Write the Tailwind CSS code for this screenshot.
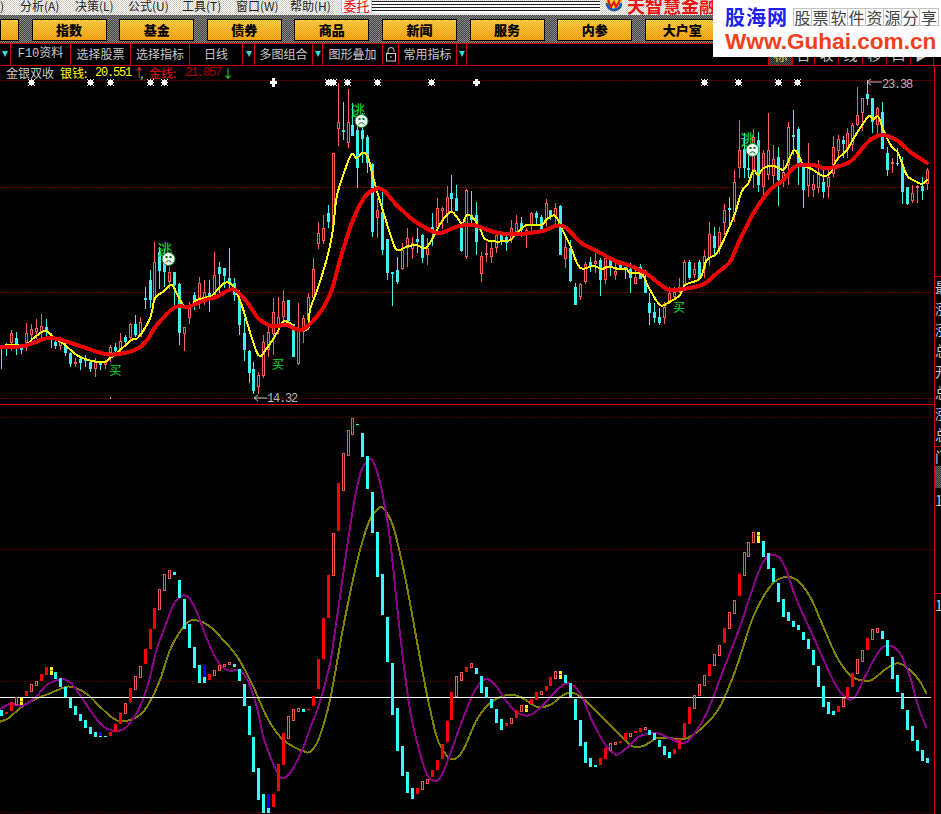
<!DOCTYPE html>
<html lang="zh">
<head>
<meta charset="UTF-8" />
<title>金银双收</title>
<script src="https://cdn.jsdelivr.net/npm/@tailwindcss/browser@4"></script>
</head>
<body class="relative w-[941px] h-[814px] overflow-hidden bg-black font-['Noto_Sans_CJK_SC',sans-serif]">

<!-- menu -->
<div class="flex h-[15px] overflow-hidden items-start bg-[repeating-conic-gradient(#ffffff_0_25%,#cfcbc0_0_50%)] bg-[length:2px_2px] text-[12px] leading-[11px] text-[#222]">
  <span class="w-[20px]">)</span>
  <span class="w-[55px]">分析(A)</span>
  <span class="w-[53px]">决策(L)</span>
  <span class="w-[54px]">公式(U)</span>
  <span class="w-[54px]">工具(T)</span>
  <span class="w-[54px]">窗口(W)</span>
  <span class="w-[51px]">帮助(H)</span>
  <span class="w-[31px] h-[13px] rounded-b-[2px] bg-white border-b border-x border-[#b8c0e0] text-center text-[13px] leading-[11px] text-[#f00000]">委托</span>
  <span class="w-[228px] h-[12px] mt-px bg-[repeating-linear-gradient(#222222_0_1px,#ffffff_1px_3px)]"></span>
  <svg class="w-[22px] h-[15px]" viewBox="0 0 22 15">
    <circle cx="14" cy="3" r="8.5" fill="#f8d020" />
    <path d="M5.5 3a8.5 8.5 0 0 0 17 0h-3a5.5 5.5 0 0 1-11 0z" fill="#1060c0" />
    <path d="M8 0l3 7 3-5 2 5 4-7" fill="none" stroke="#e01010" stroke-width="2" />
  </svg>
  <span class="ml-[5px] font-bold text-[18px] leading-[11px] text-[#f01010] whitespace-nowrap">天智慧金融</span>
</div>

<!-- yellow buttons -->
<div class="flex h-[29px] gap-[12.6px] pt-[4px] border-b border-[#d00000] bg-[repeating-conic-gradient(#888888_0_25%,#444444_0_50%)] bg-[length:2px_2px] text-[13px] font-black leading-[20px] text-center text-black *:h-[22px] *:w-[75px] *:border *:border-black *:bg-[repeating-conic-gradient(#ffffff00_0_25%,#d8800066_0_50%),linear-gradient(#ffd84f,#f8a818)] *:bg-[length:2px_2px,100%_100%]">
  <div class="!w-[19px] border-l-0"></div>
  <div>指数</div>
  <div>基金</div>
  <div>债券</div>
  <div>商品</div>
  <div>新闻</div>
  <div>服务</div>
  <div>内参</div>
  <div>大户室</div>
</div>

<!-- second toolbar -->
<div class="flex h-[22px] border-b border-[#d00000] text-[12px] leading-[20px] text-[#c8c8c8]">
  <div class="flex w-[11px] pt-[7px] justify-center border-r border-[#d00000]">
    <span class="w-0 h-0 border-x-[3px] border-x-transparent border-t-[6px] border-t-[#30d8d8]"></span>
  </div>
  <div class="w-[60px] border-r border-[#d00000] text-center font-['Liberation_Mono','Noto_Sans_CJK_SC',monospace]">F10资料</div>
  <div class="w-[60px] border-r border-[#d00000] text-center">选择股票</div>
  <div class="w-[59px] border-r border-[#d00000] text-center">选择指标</div>
  <div class="flex w-[65px] border-r border-[#d00000]">
    <span class="w-[52px] text-center">日线</span>
    <div class="flex flex-1 pt-[7px] justify-center border-l border-[#d00000]">
      <span class="w-0 h-0 border-x-[3px] border-x-transparent border-t-[6px] border-t-[#30d8d8]"></span>
    </div>
  </div>
  <div class="flex w-[68px] border-r border-[#d00000]">
    <span class="w-[57px] text-center">多图组合</span>
    <div class="flex flex-1 pt-[7px] justify-center border-l border-[#d00000]">
      <span class="w-0 h-0 border-x-[3px] border-x-transparent border-t-[6px] border-t-[#30d8d8]"></span>
    </div>
  </div>
  <div class="w-[60px] border-r border-[#d00000] text-center">图形叠加</div>
  <div class="flex w-[16px] items-center justify-center border-r border-[#d00000]">
    <svg class="w-[12px] h-[15px]" viewBox="0 0 12 15" fill="none" stroke="#d0d0d0">
      <path d="M3 6V3.5a3 3 0 0 1 6 0V5" />
      <rect x="1.5" y="6.5" width="9" height="7.5" />
      <path d="M5 10h2" />
    </svg>
  </div>
  <div class="flex w-[68px] border-r border-[#d00000]">
    <span class="w-[57px] text-center">常用指标</span>
    <div class="flex flex-1 pt-[7px] justify-center border-l border-[#d00000]">
      <span class="w-0 h-0 border-x-[3px] border-x-transparent border-t-[6px] border-t-[#30d8d8]"></span>
    </div>
  </div>
  <div class="w-[301px]"></div>
  <div class="flex text-[14px] text-center text-[#c8c8c8]">
    <span class="w-[25px] border-x border-[#d00000] text-[#e8d040] bg-[repeating-conic-gradient(#555555_0_25%,#222222_0_50%)] bg-[length:2px_2px]">标</span>
    <span class="w-[22px] border-r border-[#d00000]">日</span>
    <span class="w-[24px] border-r border-[#d00000]">收</span>
    <span class="w-[24px] border-r border-[#d00000]">线</span>
    <span class="w-[24px] border-r border-[#d00000]">移</span>
    <span class="w-[24px] border-r border-[#d00000]">口</span>
    <span class="w-[23px] border-r border-[#d00000]">▶</span>
  </div>
</div>

<!-- watermark over the toolbars -->
<div class="absolute top-0 right-0 w-[228px] h-[57px] bg-white pl-[12px] pt-[3px]">
  <div class="flex items-center h-[28px]">
    <span class="w-[68px] font-bold text-[20px] tracking-[1px] text-[#2020f0]">股海网</span>
    <div class="flex border border-[#c4c4c4] text-[16px] leading-[16px] text-[#444444]">
      <span class="w-[18px] border-r border-[#c4c4c4] text-center">股</span>
      <span class="w-[18px] border-r border-[#c4c4c4] text-center">票</span>
      <span class="w-[18px] border-r border-[#c4c4c4] text-center">软</span>
      <span class="w-[18px] border-r border-[#c4c4c4] text-center">件</span>
      <span class="w-[18px] border-r border-[#c4c4c4] text-center">资</span>
      <span class="w-[18px] border-r border-[#c4c4c4] text-center">源</span>
      <span class="w-[18px] border-r border-[#c4c4c4] text-center">分</span>
      <span class="w-[18px] text-center">享</span>
    </div>
  </div>
  <div class="font-['Liberation_Sans',sans-serif] font-bold text-[22.6px] leading-[22px] text-[#f04020] whitespace-nowrap">Www.Guhai.com.cn</div>
</div>

<!-- charts and right column -->
<div class="relative flex h-[748px]">
  <svg id="chart" class="block w-[934px] h-[748px]" viewBox="0 66 934 748"></svg>

  <div class="absolute left-[6px] top-0 flex h-[14px] items-center whitespace-nowrap text-[12px] leading-[14px] text-[#c8c8c8]">
    <span class="w-[54px]">金银双收</span>
    <span class="w-[35px] text-[#ffff00]">银钱:</span>
    <span class="w-[38px] tracking-[-1.2px] font-['Liberation_Mono',monospace] text-[#ffff00]">20.551</span>
    <span class="w-[7px] text-[#ff4040]">↑</span>
    <span class="w-[9px]">,</span>
    <span class="w-[36px] text-[#f01010]">金线:</span>
    <span class="w-[37px] tracking-[-1.2px] font-['Liberation_Mono',monospace] text-[#b80000]">21.057</span>
    <span class="text-[#30e030]">↓</span>
  </div>

  <div class="w-[7px] overflow-hidden border-l border-[#d00000] text-[14px] leading-[21px] text-[#c8c8c8] whitespace-nowrap">
    <div class="h-[211px] border-b border-[#d00000]"></div>
    <div>最</div><div>涨</div><div>涨</div><div>总</div><div>开</div><div>总</div><div>涨</div><div>总</div>
    <div class="h-[1px] mt-[1px] bg-[#d00000]"></div>
    <div class="h-[19px] leading-[18px]">门</div>
    <div class="h-[22px] bg-[repeating-conic-gradient(#666666_0_25%,#333333_0_50%)] bg-[length:2px_2px]"></div>
    <div class="h-[105px] leading-[24px]">1</div>
    <div class="h-[1px] bg-[#d00000]"></div>
    <div class="leading-[22px]">1</div>
  </div>
</div>

<script>
  const GRID = 4.95;
  const cx = i => 1.5 + GRID * i;

  // candles, read off in 3x crops: each block has an origin and a first index
  // C/R high,top,bottom,low
  const candles = [
    { oy: 230, start: 0, rows: 'C345,345,355,417 C340,345,355,380 R300,310,340,362 C305,325,345,375 C345,350,358,372 R278,310,340,362 R282,298,315,338 R268,295,308,328 R252,287,305,325 C268,290,305,330 C310,315,325,355 C320,335,348,355 R335,335,348,360 C340,345,368,380 C365,368,402,410 R385,396,398,412 C385,387,398,420 C375,385,395,410 C395,395,415,425 R385,395,415,443 C395,398,405,418 R390,395,405,418 R345,352,370,395 C340,350,363,380 R310,332,356,368 C315,320,335,350 R280,282,325,330 C255,282,315,320 R262,275,320,322 C170,205,212,235 C120,150,210,235 R37,95,210,215 C50,65,122,175 C60,90,125,170 R110,125,155,175 C125,125,165,230 C160,162,310,345 R290,292,313,362 R215,235,265,280 C185,195,215,240 R140,160,205,235 R150,185,210,225 C150,190,205,245 R67,135,195,210 C95,110,130,190 C120,115,140,175 C55,145,160,175 C145,160,195,215 C180,210,285,315 C265,310,362,395 C360,362,428,460 C395,418,485,490 R425,435,470,490 R315,335,437,445 R290,305,360,380 R205,245,310,375 R200,260,285,310 R180,212,260,290 C210,210,272,285 C283,283,382,382 R220,295,403,405 R255,265,308,340 R190,202,272,300' },
    { oy: 80, start: 63, rows: 'R535,568,655,660 R425,458,492,505 R405,445,485,492 C375,400,428,445 R220,220,435,455 R10,127,148,200 C65,150,155,180 R28,127,190,205 C70,135,168,165 C130,150,265,325 C100,150,178,250 C165,172,250,280 C250,253,458,472 R355,390,415,475 C330,395,510,525 C477,478,580,600 C575,577,584,678 C530,570,605,610 R490,510,568,570 R445,475,505,563 R470,488,505,535 C445,478,488,520 C462,465,535,550 R475,505,525,555 C400,442,450,500 R355,385,445,462 R380,385,395,445 R318,350,405,430 C285,340,358,395 C315,355,395,385 C425,425,513,515 R327,330,530,537 C333,405,420,430 C365,405,485,525 R517,527,580,607 R490,520,525,548 R480,505,532,550 R450,465,505,520 C455,465,480,495 C460,472,490,515 R420,445,480,490 R405,430,458,465 C410,430,452,470 R445,450,465,505 R395,400,440,455 C392,400,415,430 C405,410,445,450 R357,370,420,440 C390,390,410,420 R370,385,410,435 C375,377,525,525 R475,500,535,565 C480,505,603,605 C610,620,675,675 R610,612,652,660 R545,552,605,610 C530,545,560,575 R520,542,552,580 C535,540,600,650 R530,535,600,610 C535,538,560,590 R545,572,583,600 C545,548,565,570' },
    { oy: 70, start: 126, rows: 'C590,590,600,625 C580,598,625,670 R590,620,640,640 C583,590,625,625 C600,630,668,670 C670,700,730,765 C700,727,745,760 C715,742,760,765 R695,710,742,760 R650,670,695,700 R650,665,680,685 R625,650,665,670 R570,577,650,660 C570,575,622,630 R580,598,615,625 C570,575,622,625 R540,558,598,625 R457,492,565,590 C470,498,535,560 R470,485,535,550 R403,420,458,495 C380,415,420,470 R300,337,430,455 R150,240,295,325 C190,237,295,325 C240,295,302,325 R178,200,300,355 C185,210,345,365 R240,250,352,385 R130,240,315,330 R225,268,318,355 C230,262,330,407 R270,305,325,350 R157,170,285,345 C120,195,202,255 C170,178,285,345 C285,290,360,415 R220,295,348,383 R315,343,362,380 R270,305,352,368 C300,337,368,385 R300,320,350,385 R198,230,310,320 R195,208,243,270 C198,210,222,265 R175,190,240,265 R160,165,225,245 R52,135,165,168 R85,85,130,185 C30,72,88,105 C85,85,158,190 R110,115,165,190 C95,125,235,235 C230,250,300,318 R265,277,282,310 C235,280,282,290 C260,282,365,400 C350,350,402,405 R345,370,395,400 R345,348,350,400 C320,347,362,390 R295,300,342,360' }
  ];

  // bars of the lower panel: C/R/H top,bottom, Y top,bottom, B top,split,bottom
  const bars = [
    { oy: 560, start: 0, rows: 'C450,468 R456,462 R426,454 H411,435 Y414,436 R393,408 H372,396 H363,378 R342,363 R321,345 Y321,345 C336,357 C354,381 C381,411 C414,444 C438,465 C462,483 C480,504 C501,522 C516,531 B516,528,531 C528,531 R516,528 R492,516 R459,492 H429,462 R384,426 H348,390 H318,354 R267,312 R207,267 R144,207 H87,150 H42,93 H30,57 C36,45 C60,114 C117,207 C192,264 C261,324 C315,369 B315,351,369 R342,360 H330,348 H315,333 H312,321 H306,315 C312,321 C327,363 C372,438 C438,525 C531,636 C624,720 C702,759 B702,744,759 R702,741 R612,693 R519,615 H468,537 H447,483 H444,456 C447,456 R447,450' },
    { oy: 400, start: 63, rows: 'R888,918 R777,867 R654,777 R525,654 H400,528 R249,393 H159,273 H90,168 H54,105 C72,75 C99,171 C168,267 C276,399 C396,531 C522,645 C651,786 C789,945 C924,1053 C1038,1128 C1116,1179 C1164,1197 R1164,1182 H1143,1170 H1137,1152 R1110,1131 R1080,1110 R1032,1077 R963,1026 R876,960 H828,891 H816,843 R801,816 H789,804 C804,822 C828,879 C861,894 C897,924 C927,969 C957,990 R969,978 H954,972 R930,954 H915,936 Y915,936 R897,912 R876,900 H873,885 R858,873 R831,858 H813,837 Y813,837 C825,849 C849,891 C897,960 C960,1038 C1026,1089 C1074,1101 C1095,1101 R1074,1095 R1044,1077 H1029,1053 H1026,1035 R1023,1029' },
    { oy: 500, start: 126, rows: 'R699,720 H699,711 R693,699 R684,696 H681,690 C690,705 C699,720 C720,741 C738,765 C756,774 R747,762 R717,747 R669,714 R621,672 H585,627 H552,588 H525,558 R492,528 H462,498 H435,468 R384,429 H336,387 H300,342 R222,288 H156,228 H126,171 H96,129 Y96,129 C123,171 C159,207 C204,246 C249,306 C297,351 C336,363 C363,381 C375,390 C396,420 C417,447 C450,495 C498,561 C558,621 C606,642 C633,645 R618,636 H594,621 R561,594 R519,561 H477,522 H450,486 R414,450 H387,420 H384,399 C393,417 C420,468 C471,537 C525,576 C579,627 C630,690 C678,723 C720,753 C750,783 C774,789' }
  ];

  // line paths in the same crop coordinates
  const toReal = (ox, oy, pts) => pts.map(([x, y]) => [ox + x / 3, oy + y / 3]);

  const yellow = [
    ...toReal(0, 230, [[0,352],[25,345],[75,345],[100,325],[135,303],[165,325],[195,345],[230,375],[265,390],[310,397],[330,385],[355,365],[395,330],[415,322],[450,265],[465,205],[490,185],[515,165],[530,190],[550,225],[570,230],[590,210],[635,197],[660,170],[680,157],[700,170],[725,225],[745,290],[775,375],[800,355],[830,310],[850,275],[870,280],[890,297],[925,295]]),
    ...toReal(310, 80, [[0,690],[25,620],[55,520],[70,440],[80,350],[105,270],[125,222],[140,235],[160,218],[175,235],[190,295],[215,380],[240,460],[260,510],[290,500],[320,495],[345,505],[365,480],[395,425],[425,395],[455,430],[470,405],[490,415],[510,445],[530,480],[595,482],[620,460],[650,435],[695,435],[710,418],[735,407],[755,445],[780,495],[810,563],[850,558],[875,567],[895,560],[925,567]]),
    ...toReal(620, 70, [[0,597],[20,597],[30,610],[65,612],[85,650],[120,705],[150,695],[180,675],[195,645],[240,625],[260,570],[290,550],[320,490],[345,430],[365,365],[385,340],[400,302],[415,315],[430,295],[460,287],[480,297],[495,295],[520,243],[535,255],[550,285],[575,297],[610,318],[630,310],[650,270],[680,240],[710,190],[745,140],[760,148],[775,140],[790,180],[815,230],[835,250],[860,315],[880,330],[905,342],[920,330]])
  ];
  const red = [
    ...toReal(0, 230, [[0,350],[25,352],[75,347],[110,335],[140,325],[175,327],[215,340],[260,355],[320,373],[370,370],[415,355],[445,325],[470,285],[525,232],[565,230],[610,212],[650,200],[700,178],[740,215],[775,265],[815,288],[860,285],[890,298],[915,295]]),
    ...toReal(310, 80, [[35,690],[65,630],[90,540],[125,430],[155,365],[180,335],[215,327],[260,375],[310,420],[370,455],[400,457],[440,440],[490,435],[540,452],[590,462],[690,455],[740,437],[770,445],[815,490],[870,518],[925,548]]),
    ...toReal(620, 70, [[0,577],[70,605],[130,650],[160,660],[245,645],[290,610],[330,575],[355,520],[400,430],[450,360],[490,330],[530,287],[590,287],[620,295],[690,275],[745,215],[785,195],[830,210],[870,245],[920,278]])
  ];
  const purple = [
    ...toReal(0, 560, [[0,447],[30,432],[50,435],[75,435],[110,408],[140,375],[165,363],[190,357],[215,372],[240,405],[270,450],[300,490],[330,510],[365,510],[390,490],[420,440],[445,370],[470,270],[495,200],[520,135],[545,108],[565,112],[590,155],[620,235],[650,300],[680,330],[720,333],[745,365],[770,440],[790,530],[815,600],[840,650],[860,650],[885,615],[915,550]]),
    ...toReal(310, 400, [[0,985],[25,920],[60,790],[90,590],[125,350],[150,225],[170,185],[190,185],[215,270],[240,420],[270,700],[300,930],[330,1060],[355,1130],[385,1140],[410,1090],[450,980],[490,880],[525,838],[555,855],[590,905],[625,940],[660,945],[700,915],[740,870],[775,850],[810,880],[850,970],[890,1040],[915,1063]]),
    ...toReal(620, 500, [[0,760],[30,735],[60,708],[110,700],[150,715],[190,730],[220,705],[260,640],[310,510],[360,380],[400,260],[430,185],[460,165],[490,190],[530,300],[580,410],[620,500],[650,560],[680,595],[705,590],[740,520],[780,450],[810,437],[840,460],[870,530],[895,620],[919,683]])
  ];
  const olive = [
    ...toReal(0, 560, [[0,485],[25,475],[60,445],[100,420],[150,400],[200,380],[230,385],[265,405],[300,440],[340,475],[370,484],[420,465],[450,425],[480,360],[510,270],[540,215],[565,185],[595,182],[630,200],[670,240],[715,295],[760,380],[800,470],[840,530],[880,560],[915,575]]),
    ...toReal(310, 400, [[0,1055],[25,1020],[60,900],[100,680],[140,490],[175,370],[200,330],[220,325],[250,380],[285,530],[320,720],[350,880],[380,1010],[405,1060],[430,1078],[460,1050],[500,960],[540,910],[590,885],[630,890],[680,920],[720,915],[760,885],[790,878],[830,905],[880,955],[925,1000]]),
    ...toReal(620, 500, [[0,705],[35,738],[70,738],[110,715],[150,715],[200,715],[250,680],[300,620],[350,500],[400,350],[450,260],[490,232],[530,240],[570,290],[610,380],[650,470],[690,525],[720,540],[755,540],[800,505],[835,490],[870,510],[900,545],[919,580]])
  ];

  function smooth(pts, width, color) {
    let d = `M${pts[0][0]} ${pts[0][1]}`;
    for (let i = 0; i < pts.length - 1; i++) {
      const p0 = pts[i - 1] || pts[i], p1 = pts[i], p2 = pts[i + 1], p3 = pts[i + 2] || p2;
      const c1 = [p1[0] + (p2[0] - p0[0]) / 6, p1[1] + (p2[1] - p0[1]) / 6];
      const c2 = [p2[0] - (p3[0] - p1[0]) / 6, p2[1] - (p3[1] - p1[1]) / 6];
      d += `C${c1[0].toFixed(1)} ${c1[1].toFixed(1)} ${c2[0].toFixed(1)} ${c2[1].toFixed(1)} ${p2[0].toFixed(1)} ${p2[1].toFixed(1)}`;
    }
    return `<path d="${d}" fill="none" stroke="${color}" stroke-width="${width}" stroke-linejoin="round" stroke-linecap="round" shape-rendering="crispEdges" />`;
  }

  const rect = (x, y, w, h, fill) => `<rect x="${x}" y="${Math.round(y)}" width="${w}" height="${Math.max(1, Math.round(h))}" fill="${fill}" />`;
  const hollow = (x, y, h, color) => `<rect x="${x + 0.5}" y="${Math.round(y) + 0.5}" width="2" height="${Math.max(1, Math.round(h) - 1)}" fill="none" stroke="${color}" />`;

  function drawCandles() {
    let out = '';
    candles.forEach(block => {
      const Y = z => block.oy + z / 3;
      block.rows.split(' ').forEach((row, k) => {
        const [hi, top, bot, lo] = row.slice(1).split(',').map(Number);
        const x = Math.round(cx(block.start + k) - 1.5);
        const color = row[0] === 'C' ? '#40f0f0' : '#ff5a5a';
        out += rect(x + 1, Y(hi), 1, Y(lo) - Y(hi), color);
        if (row[0] === 'C') out += rect(x, Y(top), 3, Y(bot) - Y(top), color);
        else out += rect(x, Y(top), 3, Y(bot) - Y(top), '#000') + hollow(x, Y(top), Y(bot) - Y(top), color);
      });
    });
    return out;
  }

  function drawBars() {
    let out = '';
    bars.forEach(block => {
      const Y = z => block.oy + z / 3;
      block.rows.split(' ').forEach((row, k) => {
        const v = row.slice(1).split(',').map(Number);
        const x = Math.round(cx(block.start + k) - 1.5);
        const top = Y(v[0]), bot = Y(v[v.length - 1]);
        if (row[0] === 'C') out += rect(x, top, 3, bot - top, '#33ffff');
        if (row[0] === 'R') out += rect(x, top, 3, bot - top, '#ff0000');
        if (row[0] === 'H') out += hollow(x, top, bot - top, '#ee5555');
        if (row[0] === 'Y') out += rect(x, top, 3, bot - top, '#ffff00') + rect(x, top + 3, 3, 1, '#ff4040');
        if (row[0] === 'B') out += rect(x, top, 3, bot - top, '#33ffff') + rect(x, top, 3, Y(v[1]) - top, '#0000ff');
      });
    });
    return out;
  }

  const dotted = (y, color) => `<line x1="0" x2="934" y1="${y}.5" y2="${y}.5" stroke="${color}" stroke-dasharray="2 1" />`;

  const STAR = ['#..#..#', '.#####.', '.#####.', '#######', '.#####.', '.#####.', '#..#..#'];
  function star(x) {
    let out = '';
    STAR.forEach((line, r) => [...line].forEach((c, k) => {
      if (c === '#') out += rect(x - 3 + k, 79 + r, 1, 1, '#fff');
    }));
    return out;
  }
  const cross = (x, tall) => rect(x - 1, 79 - tall, 3, 7 + 2 * tall, '#fff') + rect(x - 3, 81, 7, 3, '#fff');

  function face(x, y) {
    return `<circle cx="${x}" cy="${y}" r="6.5" fill="#f4fff4" stroke="#089020" />
      <rect x="${x - 3}" y="${y - 3}" width="2" height="2" fill="#062" /><rect x="${x + 1}" y="${y - 3}" width="2" height="2" fill="#062" />
      <path d="M${x - 3} ${y + 3.5}q3 -3.5 6 0" fill="none" stroke="#062" />`;
  }
  const label = (x, y, text, color, size) => `<text x="${x}" y="${y}" fill="${color}" font-size="${size}" font-family="'Noto Sans CJK SC',sans-serif" text-anchor="middle">${text}</text>`;
  const price = (x, y, text) => `<text x="${x}" y="${y}" fill="#b8b8b8" font-size="12" letter-spacing="-1.2" font-family="'Liberation Mono',monospace">${text}</text>`;

  let svg = '';
  [80, 187, 292, 398].forEach(y => svg += dotted(y, '#6e0000'));
  [417, 549, 681, 812].forEach(y => svg += dotted(y, '#4a0000'));
  svg += rect(0, 404, 934, 1, '#e00000');

  [31, 90, 110, 150, 164, 328, 333, 347, 377, 431, 704, 738, 778, 797].forEach(x => svg += star(x));
  svg += cross(273, 1) + cross(476, 0);

  svg += drawCandles();
  svg += smooth(yellow, 2, '#ffff00') + smooth(red, 4, '#f00000');

  svg += label(165, 255, '逃', '#10e030', 15) + face(168.5, 259);
  svg += label(358, 116, '逃', '#10e030', 15) + face(361.5, 121);
  svg += label(748, 145, '逃', '#10e030', 15) + face(752.5, 150);
  svg += label(115.5, 375, '买', '#10e030', 12) + label(278, 369, '买', '#10e030', 12) + label(679, 312, '买', '#10e030', 12);
  svg += rect(110, 397, 1, 2, '#aaa');

  svg += `<path d="M258 395l-4 3 4 3M254 398h13" fill="none" stroke="#c0c0c0" />` + price(267, 402, '14.32');
  svg += `<path d="M871 79l-4 3 4 3M867 82h15" fill="none" stroke="#c0c0c0" />` + price(882, 88, '23.38');

  svg += smooth(olive, 2, '#808000') + smooth(purple, 2, '#8c008c');
  svg += rect(0, 697, 931, 1, '#ffffff');
  svg += drawBars();

  document.getElementById('chart').innerHTML = svg;
</script>
</body>
</html>
